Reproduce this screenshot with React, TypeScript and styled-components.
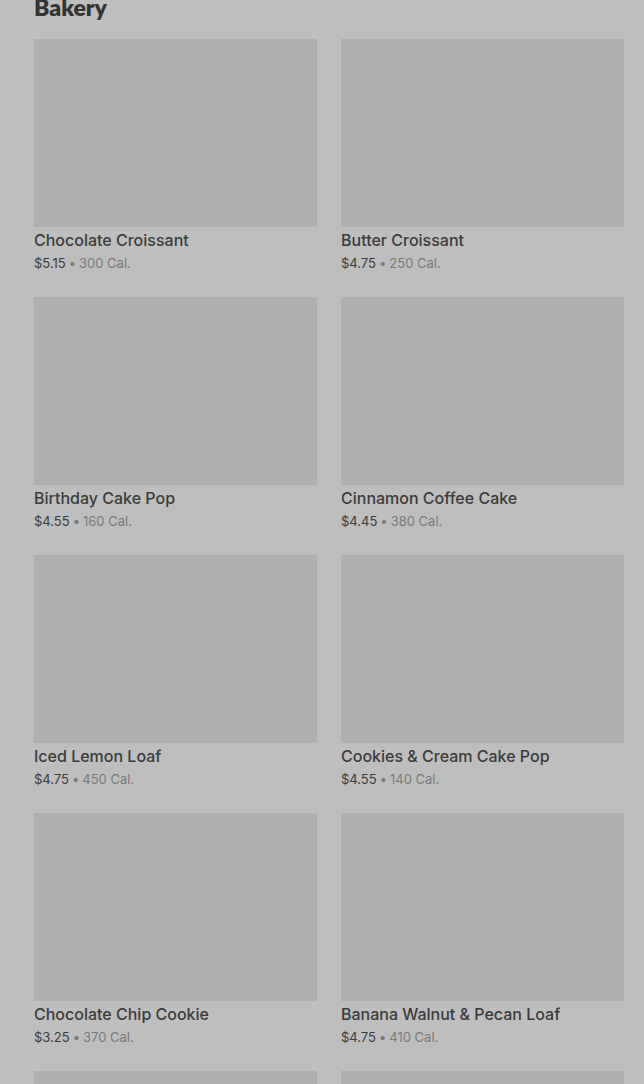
import React from 'react';
import styled, { createGlobalStyle } from 'styled-components';

const GlobalStyle = createGlobalStyle`
  html, body {
    margin: 0;
    padding: 0;
    background: #bebebe;
    overflow: hidden;
  }
  body {
    font-family: Inter, "Liberation Sans", sans-serif;
  }
`;

const Page = styled.div`
  width: 644px;
  height: 1084px;
  overflow: hidden;
  background: #bebebe;
  padding: 0 20px 0 34px;
  box-sizing: border-box;
`;

const Heading = styled.h2`
  margin: -7px 0 0;
  font-family: Lato, Inter, sans-serif;
  font-weight: 800;
  font-size: 23px;
  line-height: 28px;
  color: #343434;
`;

const Grid = styled.div`
  display: grid;
  grid-template-columns: 283px 283px;
  column-gap: 24px;
  row-gap: 26px;
  margin-top: 18px;
`;

const Card = styled.div`
  display: flex;
  flex-direction: column;
`;

const Thumb = styled.div`
  height: 188px;
  background: #b0b0b0;
`;

const Name = styled.div`
  margin-top: 4px;
  font-size: 16px;
  font-weight: 500;
  line-height: 18px;
  color: #3b3b3b;
`;

const Meta = styled.div`
  margin-top: 6px;
  font-size: 13px;
  line-height: 16px;
  color: #3b3b3b;
`;

const Dot = styled.span`
  color: #7a7a7a;
  margin: 0 3px;
`;

const Cal = styled.span`
  color: #7a7a7a;
`;

const items = [
  { name: 'Chocolate Croissant', price: '$5.15', cal: '300 Cal.' },
  { name: 'Butter Croissant', price: '$4.75', cal: '250 Cal.' },
  { name: 'Birthday Cake Pop', price: '$4.55', cal: '160 Cal.' },
  { name: 'Cinnamon Coffee Cake', price: '$4.45', cal: '380 Cal.' },
  { name: 'Iced Lemon Loaf', price: '$4.75', cal: '450 Cal.' },
  { name: 'Cookies & Cream Cake Pop', price: '$4.55', cal: '140 Cal.' },
  { name: 'Chocolate Chip Cookie', price: '$3.25', cal: '370 Cal.' },
  { name: 'Banana Walnut & Pecan Loaf', price: '$4.75', cal: '410 Cal.' },
  { name: 'Plain Bagel', price: '$2.45', cal: '280 Cal.' },
  { name: 'Blueberry Muffin', price: '$3.45', cal: '360 Cal.' },
];

export default function App() {
  return (
    <Page>
      <GlobalStyle />
      <Heading>Bakery</Heading>
      <Grid>
        {items.map((it) => (
          <Card key={it.name}>
            <Thumb />
            <Name>{it.name}</Name>
            <Meta>
              {it.price}
              <Dot>•</Dot>
              <Cal>{it.cal}</Cal>
            </Meta>
          </Card>
        ))}
      </Grid>
    </Page>
  );
}
